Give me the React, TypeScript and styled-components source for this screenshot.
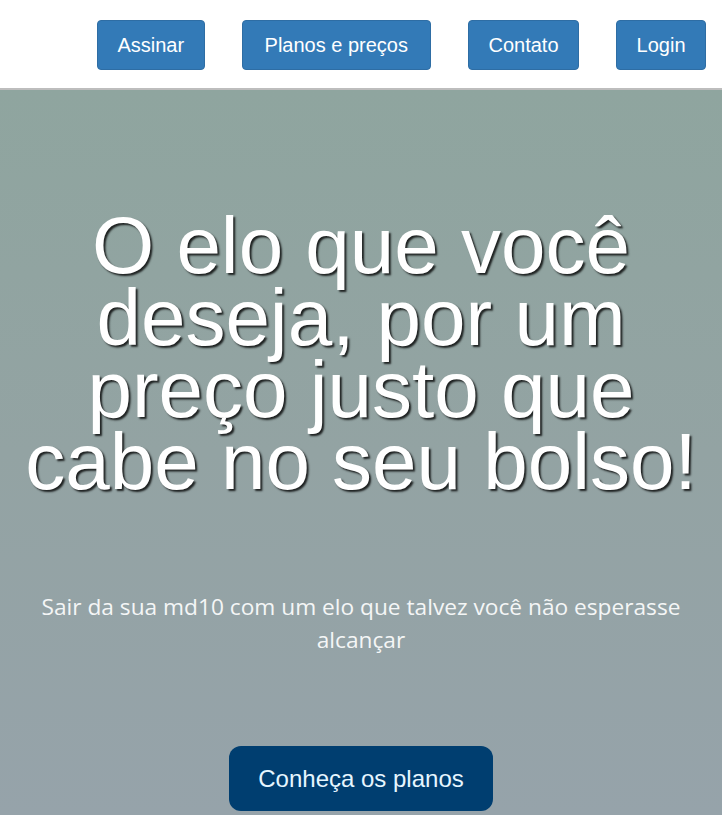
import React from "react";
import styled, { createGlobalStyle } from "styled-components";

const GlobalStyle = createGlobalStyle`
  html, body { margin: 0; padding: 0; }
  body { font-family: "Liberation Sans", Arial, sans-serif; background: #fff; }
`;

const Header = styled.header`
  display: flex;
  align-items: center;
  justify-content: flex-end;
  gap: 37px;
  padding: 2px 16px 0 0;
  box-sizing: content-box;
  height: 86px;
  border-bottom: 2px solid #bdbdbd;
  background: #fff;
`;

const NavButton = styled.a<{ $wide?: boolean }>`
  height: 50px;
  box-sizing: border-box;
  display: inline-flex;
  align-items: center;
  padding: 0 ${(p) => (p.$wide ? "22px" : "19.5px")};
  background: #337ab7;
  border: 1px solid #2e6da4;
  border-radius: 4px;
  color: #fff;
  font-family: "Liberation Sans", Arial, sans-serif;
  font-size: 20px;
  text-decoration: none;
`;

const Hero = styled.section`
  background: linear-gradient(to bottom, #8fa59f 0%, #93a3a3 50%, #96a3aa 100%);
  padding: 120px 0 0;
  min-height: 725px;
  box-sizing: border-box;
  display: flex;
  flex-direction: column;
  align-items: center;
  text-align: center;
`;

const Title = styled.h1`
  margin: 0;
  padding: 0 12px;
  font-family: "Liberation Sans", Arial, sans-serif;
  font-weight: 400;
  font-size: 80px;
  line-height: 72px;
  color: #fff;
  text-shadow: 2px 2px 2px rgba(0, 0, 0, 0.8);
`;

const Subtitle = styled.p`
  margin: 92px 0 0;
  padding: 0 20px;
  font-family: "Open Sans", "Noto Sans", sans-serif;
  font-size: 22.7px;
  line-height: 33px;
  color: #f4f6f6;
`;

const CtaButton = styled.a`
  margin-top: 90px;
  height: 65px;
  box-sizing: border-box;
  display: inline-flex;
  align-items: center;
  padding: 0 29px;
  background: #003e70;
  border-radius: 12px;
  color: #e6f6ff;
  font-family: "Liberation Sans", Arial, sans-serif;
  font-size: 24px;
  text-decoration: none;
`;

export default function App() {
  return (
    <>
      <GlobalStyle />
      <Header>
        <NavButton href="#">Assinar</NavButton>
        <NavButton href="#" $wide>
          Planos e preços
        </NavButton>
        <NavButton href="#">Contato</NavButton>
        <NavButton href="#">Login</NavButton>
      </Header>
      <Hero>
        <Title>
          O elo que você
          <br />
          deseja, por um
          <br />
          preço justo que
          <br />
          cabe no seu bolso!
        </Title>
        <Subtitle>
          Sair da sua md10 com um elo que talvez você não esperasse
          <br />
          alcançar
        </Subtitle>
        <CtaButton href="#">Conheça os planos</CtaButton>
      </Hero>
    </>
  );
}
